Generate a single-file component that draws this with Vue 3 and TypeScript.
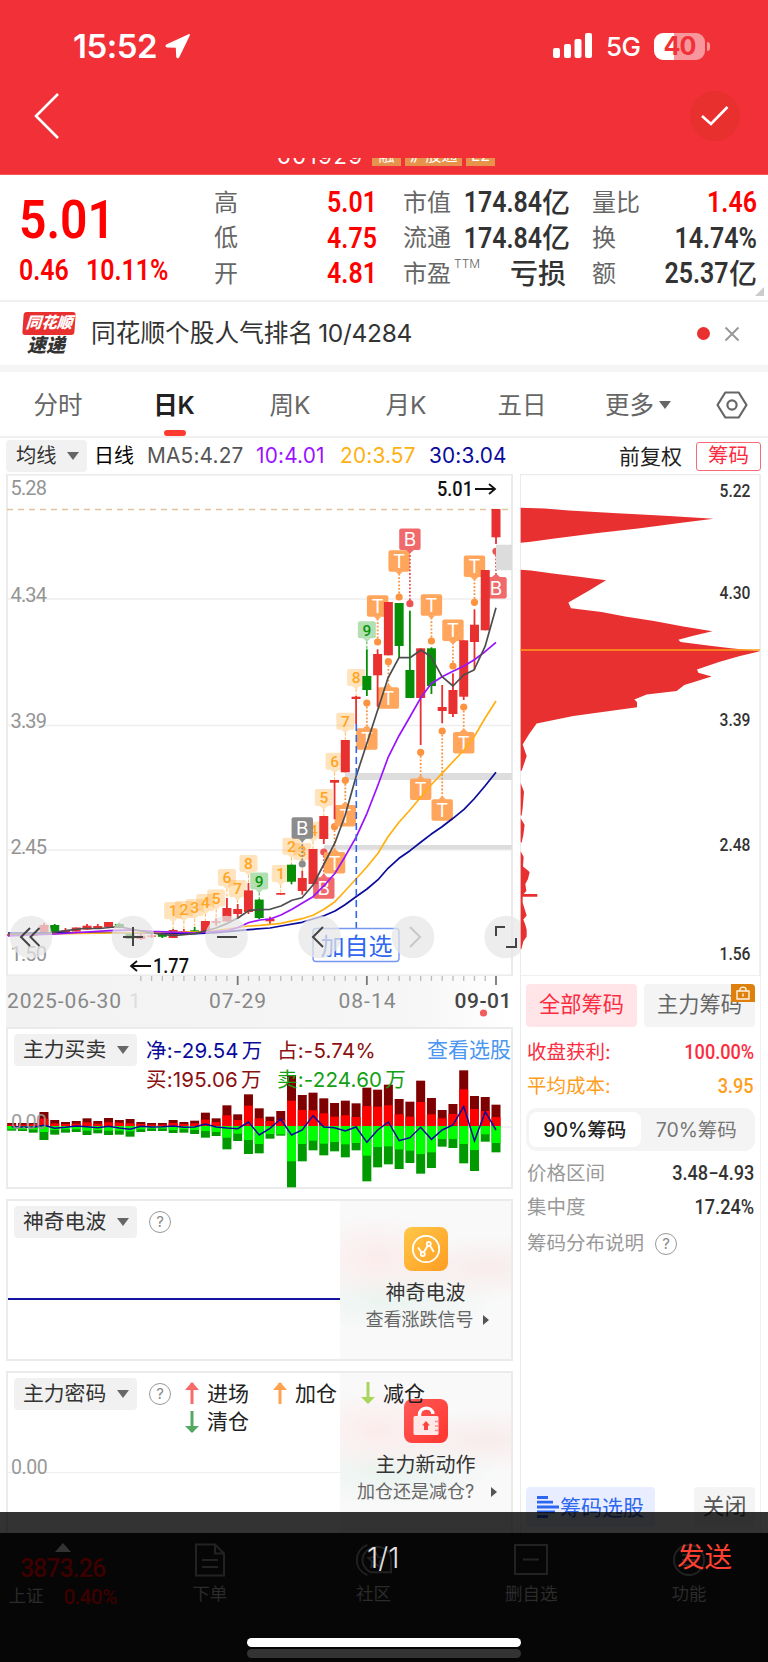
<script setup lang="ts">
interface Candle {
    up: boolean;
    top: number;
    bottom: number;
    high: number;
    low: number;
}

interface Signal {
    i: number;
    box: number;
    dot: number;
    text: string;
    kind: string;
}

const STEP = 10.763;
const FIRST = 11.67;
const ZERO = 498;

const xAt = (i: number) => FIRST + i * STEP;

//// quote header
const quoteCols = [
    [
        { label: "高", value: "5.01", unit: "", red: true },
        { label: "低", value: "4.75", unit: "", red: true },
        { label: "开", value: "4.81", unit: "", red: true },
    ],
    [
        { label: "市值", value: "174.84", unit: "亿", red: false },
        { label: "流通", value: "174.84", unit: "亿", red: false },
        { label: "市盈", sup: "TTM", value: "", unit: "亏损", red: false },
    ],
    [
        { label: "量比", value: "1.46", unit: "", red: true },
        { label: "换", value: "14.74%", unit: "", red: false },
        { label: "额", value: "25.37", unit: "亿", red: false },
    ],
];

const tabs = ["分时", "日K", "周K", "月K", "五日", "更多"];

//// candles: up, body top, body bottom, high, low
const rawCandles: [number, number, number, number, number][] = [
    [1, 934, 936, 934, 936],
    [1, 934, 936, 933, 937],
    [1, 934, 936, 934, 936],
    [1, 925, 932.5, 923, 932.5],
    [0, 925, 932, 924, 932],
    [1, 930.5, 932, 928, 932],
    [1, 927.5, 931.5, 927.5, 931.5],
    [1, 925.7, 929.6, 924, 929.6],
    [1, 926, 928.3, 924, 928.3],
    [1, 922, 927, 922, 927],
    [0, 924, 927.5, 923, 927.5],
    [0, 934, 939, 934, 939],
    [1, 935.7, 939, 934, 940],
    [1, 935.5, 936.7, 934, 938],
    [0, 934, 936.8, 934, 938],
    [1, 930, 938, 929, 938],
    [1, 931, 932.6, 929, 932.6],
    [0, 930.3, 932, 927, 932],
    [1, 921, 931, 921, 931],
    [1, 921.3, 922.8, 918.5, 925.7],
    [1, 908, 921.5, 898, 921.5],
    [1, 909, 914, 904, 917.5],
    [1, 890.4, 912, 883, 914],
    [0, 899.6, 918, 899, 919],
    [1, 918.7, 921.3, 916.7, 924.7],
    [1, 893, 894.7, 893, 894.7],
    [0, 864.7, 881.7, 864.7, 884.3],
    [1, 878, 891, 870.7, 894.7],
    [1, 849, 884, 849, 884],
    [1, 816, 839, 816, 844],
    [1, 780, 782.7, 780, 819.3],
    [1, 740, 772.3, 740, 772.3],
    [1, 696.7, 699, 696, 724],
    [0, 676, 690, 649.3, 696],
    [1, 654, 675.3, 649.3, 706.7],
    [1, 602, 655.3, 602, 655.3],
    [0, 603, 646, 603, 658],
    [0, 670, 698, 610.7, 698],
    [1, 648.3, 698, 648.3, 745],
    [0, 648.3, 686, 647.3, 694],
    [1, 707, 711, 685, 723.3],
    [1, 690, 714, 673.3, 717],
    [1, 640.3, 696.7, 640.3, 700],
    [1, 624.7, 642, 609.3, 670],
    [1, 570, 630.3, 570, 630.3],
    [1, 509, 537.3, 509, 544],
];

const candles: Candle[] = rawCandles.map((c) => ({
    up: c[0] === 1,
    top: c[1],
    bottom: c[2],
    high: c[3],
    low: c[4],
}));

//// moving averages, x y pairs
const maLines = [
    {
        color: "#0a0a9c",
        points: "8,933 109,932.5 195,933.6 216,932.7 238,930.7 249,929.6 270,928 281,926 302,922.3 324,915.7 335,911 345,904.7 356,896.7 367,889 378,879.7 388,868.3 399,858.3 410,850.7 421,842 431,834.3 442,826.7 453,818.3 464,809.3 474,799 485,786 496,772.3",
    },
    {
        color: "#ffb012",
        points: "8,934.6 109,933 206,931.8 227,929 238,927.5 249,926 260,925.3 281,923.3 302,918.7 313,915.3 324,909.3 335,901.7 345,891 356,879 367,866.7 378,853.3 388,836.7 399,822.3 410,810 421,796.7 431,785 442,773.3 453,761.7 464,750 474,737 485,718.3 496,701",
    },
    {
        color: "#9a12ff",
        points: "8,936 55,934 109,930.7 130,930 152,931.4 195,933 227,930.7 238,927.5 249,922.5 260,920 270,919 281,915 292,909.3 302,903.3 313,896.7 324,885.7 335,873.3 345,856.7 356,837.3 367,813.3 378,785 388,757.7 399,735.7 410,716.7 421,697.3 431,684 442,676.7 453,671.3 464,666 474,660 485,651.7 496,642.3",
    },
    {
        color: "#4d4d4d",
        points: "8,934 44,933.5 66,930.7 83,928.5 100,928.5 114,927 123,927.5 152,933 173,935.7 195,933.6 206,930.7 216,928 227,923.6 238,918 249,910.4 260,909.7 270,909.3 281,906 292,900.3 302,897.7 313,885 324,864 335,842.7 345,815.7 356,776.7 367,743 378,709 388,678 399,657.7 410,657.7 421,650 431,656.7 442,676.7 453,686 464,674.7 474,670 485,646.7 496,607.7",
    },
];

//// nine-turn counters: index, tag centre, number
const counters = [
    { i: 15, y: 911, n: 1 },
    { i: 16, y: 910, n: 2 },
    { i: 17, y: 908, n: 3 },
    { i: 18, y: 903, n: 4 },
    { i: 19, y: 898.6, n: 5 },
    { i: 20, y: 878, n: 6 },
    { i: 21, y: 889, n: 7 },
    { i: 22, y: 864, n: 8 },
    { i: 23, y: 881.5, n: 9 },
    { i: 25, y: 874, n: 1 },
    { i: 26, y: 846.7, n: 2 },
    { i: 27, y: 852, n: 3 },
    { i: 28, y: 830.7, n: 4 },
    { i: 29, y: 798, n: 5 },
    { i: 30, y: 761.7, n: 6 },
    { i: 31, y: 721.7, n: 7 },
    { i: 32, y: 678, n: 8 },
    { i: 33, y: 630.3, n: 9 },
];

const signals: Signal[] = [
    { i: 27, box: 828, dot: 864, text: "B", kind: "gray" },
    { i: 29, box: 888, dot: 852, text: "B", kind: "red" },
    { i: 30, box: 862.7, dot: 826.7, text: "T", kind: "orange" },
    { i: 31, box: 815.7, dot: 780.3, text: "T", kind: "orange" },
    { i: 33, box: 739, dot: 703, text: "T", kind: "orange" },
    { i: 34, box: 606, dot: 642, text: "T", kind: "orange" },
    { i: 35, box: 698, dot: 661.7, text: "T", kind: "orange" },
    { i: 36, box: 561, dot: 597, text: "T", kind: "orange" },
    { i: 37, box: 539.3, dot: 603.7, text: "B", kind: "red" },
    { i: 38, box: 789.3, dot: 752.3, text: "T", kind: "orange" },
    { i: 39, box: 605, dot: 641, text: "T", kind: "orange" },
    { i: 40, box: 810, dot: 731, text: "T", kind: "orange" },
    { i: 41, box: 630.3, dot: 666, text: "T", kind: "orange" },
    { i: 42, box: 742.7, dot: 707, text: "T", kind: "orange" },
    { i: 43, box: 566.3, dot: 602.3, text: "T", kind: "orange" },
    { i: 45, box: 587.7, dot: 551.3, text: "B", kind: "red" },
];

// small triangle between the box and its dot
const notch = (s: Signal) => {
    const x = xAt(s.i);
    const dir = s.dot > s.box ? 1 : -1;
    const y = s.box + dir * 10.6;
    return `${x - 4},${y} ${x + 4},${y} ${x},${y + dir * 3.5}`;
};

const buttons = [
    { x: 31, d: "M30 928l-9 9 9 9M39.5 928l-9 9 9 9" },
    { x: 133, d: "M123 937h20M133 927v19" },
    { x: 226.5, d: "M217 937h20" },
    { x: 319.5, d: "M323 927l-10 10 10 10" },
    { x: 413, d: "M410 927l10 10-10 10", dim: true },
    { x: 505.7, d: "M496 936v-9h9M516 938v9h-10" },
];

const ticks = Array.from({ length: 34 }, (_, k) => k + 12);
const isMajor = (i: number) => i === 21 || i === 33 || i === 45;

//// main force: buy top, active buy top, active sell bottom, sell bottom, net
const flow = [
    [489, 494, 508, 512, 500],
    [489, 494, 508, 513, 501],
    [489, 493, 509, 518, 502],
    [456, 476, 516, 540, 496],
    [480, 490, 510, 524, 505],
    [486, 492, 508, 518, 502],
    [483, 491, 508, 516, 498],
    [475, 487, 512, 525, 500],
    [483, 491, 510, 520, 503],
    [474, 487, 512, 525, 499],
    [480, 488, 512, 524, 504],
    [477, 490, 514, 530, 508],
    [486, 492, 508, 516, 499],
    [489, 494, 506, 513, 501],
    [489, 494, 506, 513, 500],
    [480, 489, 510, 519, 498],
    [486, 492, 508, 518, 502],
    [482, 490, 510, 522, 501],
    [458, 479, 513, 533, 492],
    [475, 486, 516, 528, 501],
    [436, 466, 533, 568, 504],
    [463, 480, 521, 543, 506],
    [403, 437, 540, 582, 486],
    [445, 475, 552, 580, 525],
    [470, 483, 522, 536, 505],
    [453, 480, 523, 527, 477],
    [345, 422, 604, 682, 525],
    [405, 450, 552, 604, 510],
    [398, 451, 542, 571, 467],
    [415, 460, 551, 586, 501],
    [429, 470, 546, 574, 503],
    [422, 466, 553, 592, 513],
    [430, 471, 549, 571, 501],
    [383, 438, 587, 664, 547],
    [389, 440, 561, 622, 510],
    [374, 436, 559, 613, 486],
    [417, 463, 568, 627, 542],
    [425, 470, 572, 609, 533],
    [362, 426, 582, 641, 502],
    [414, 463, 577, 624, 538],
    [450, 475, 537, 560, 510],
    [432, 462, 537, 564, 495],
    [331, 388, 552, 610, 439],
    [408, 447, 570, 633, 543],
    [411, 453, 523, 545, 455],
    [434, 471, 549, 577, 510],
];

const flowY = (v: number) => 960 + v / 3;
const netLine = flow.map((f, i) => `${xAt(i)},${flowY(f[4])}`).join(" ");

const chipLabels = [
    { y: 491, text: "5.22" },
    { y: 593.4, text: "4.30" },
    { y: 719.5, text: "3.39" },
    { y: 844.6, text: "2.48" },
    { y: 954, text: "1.56" },
];

const chipShapes = [
    "32,112 105,114 177,120 322,128 465,135 611,144 515,156 384,173 257,187 128,203 63,212 32,215",
    "32,295 63,297 128,306 208,316 288,326 235,358 175,392 183,409 275,420 345,433 432,447 520,463 607,477 550,490 505,502 512,509 600,520 663,527 750,536 690,550 627,568 561,590 565,600 605,611 523,636 500,654 410,664 373,679 381,686 381,702 305,712 190,728 80,750 58,780 38,812 50,846 42,870 35,890 32,890",
    "32,926 42,952 38,1000 35,1022 32,1022",
    "32,1030 44,1050 40,1080 35,1102 32,1102",
    "32,1128 41,1145 39,1173 59,1189 54,1210 46,1225 49,1245 41,1254 82,1254 82,1262 38,1262 38,1280 50,1318 40,1330 46,1345 50,1360 50,1380 40,1395 34,1418 32,1418",
];
</script>

<template>
    <div class="phone">
        <header class="top">
            <div class="status">
                <span class="time">15:52</span>
                <svg class="locate" width="26" height="26" viewBox="0 0 26 26">
                    <path
                        d="M23.5 1.2 1.8 11.3c-2 1-1.5 3 .5 3.1l8.500.4.4 8.700c.1 2 2.300 2.500 3.200.5L24.8 2.5c.5-1.2-.3-1.7-1.3-1.3z"
                        fill="#fff"
                    />
                </svg>
                <svg class="signal" width="40" height="26" viewBox="0 0 40 26">
                    <rect x="0" y="15" width="7" height="10" rx="2" />
                    <rect x="11" y="11" width="7" height="14" rx="2" />
                    <rect x="21.5" y="6" width="7" height="19" rx="2" />
                    <rect x="32" y="0" width="7" height="25" rx="2" />
                </svg>
                <span class="net">5G</span>
                <div class="battery"><span>40</span></div>
                <i class="nub"></i>
            </div>
            <div class="nav">
                <svg width="26" height="46" viewBox="0 0 26 46">
                    <path d="M24 1 2 23l22 22" fill="none" stroke="#fff" stroke-width="2.6" />
                </svg>
                <div class="confirm">
                    <svg width="28" height="20" viewBox="0 0 28 20">
                        <path d="M1 10l9 8L26.5 1" fill="none" stroke="#fff" stroke-width="2.6" />
                    </svg>
                </div>
            </div>
            <div class="code-clip">
                <div class="code-row">
                    <span class="code">601929</span>
                    <span class="tag">融</span>
                    <span class="tag wide">沪股通</span>
                    <span class="tag">L2</span>
                </div>
            </div>
        </header>

        <section class="quote">
            <div class="price">
                <div class="now"><span class="din">5.01</span></div>
                <div class="change">
                    <span class="din diff">0.46</span>
                    <span class="din">10.11%</span>
                </div>
            </div>
            <div v-for="(col, c) in quoteCols" :key="c" class="quote-col">
                <div v-for="row in col" :key="row.label" class="quote-row">
                    <span class="q-label">{{ row.label }}<sup v-if="'sup' in row">{{ row.sup }}</sup></span>
                    <span class="q-value" :class="{ red: row.red }">
                        <b class="din">{{ row.value }}</b>{{ row.unit }}
                    </span>
                </div>
            </div>
            <i class="corner"></i>
        </section>

        <section class="news">
            <div class="logo">
                <div class="logo-top">同花顺</div>
                <div class="logo-bottom">速递</div>
            </div>
            <span class="news-text">同花顺个股人气排名<em>10/4284</em></span>
            <i class="news-dot"></i>
            <svg width="16" height="16" viewBox="0 0 16 16">
                <path d="M1.5 1.5l13 13M14.5 1.5l-13 13" stroke="#999" stroke-width="2" />
            </svg>
        </section>

        <nav class="tabs">
            <div v-for="(tab, t) in tabs" :key="tab" class="tab" :class="{ active: t === 1 }">
                {{ tab }}<i v-if="t === 5" class="caret"></i>
            </div>
            <div class="tab">
                <svg width="32" height="28" viewBox="0 0 32 28">
                    <path
                        d="M9.3 1.5h13.4L30.5 14l-7.8 12.5H9.3L1.5 14z"
                        fill="none"
                        stroke="#666"
                        stroke-width="2.2"
                        stroke-linejoin="round"
                    />
                    <circle cx="16" cy="14" r="4.6" fill="none" stroke="#666" stroke-width="2.2" />
                </svg>
            </div>
        </nav>

        <div class="ma-row">
            <div class="select small">均线<i class="caret"></i></div>
            <span class="ma-day">日线</span>
            <span class="ma ma5">MA5:4.27</span>
            <span class="ma ma10">10:4.01</span>
            <span class="ma ma20">20:3.57</span>
            <span class="ma ma30">30:3.04</span>
            <span class="adjust">前复权</span>
            <span class="chip-btn">筹码</span>
        </div>

        <main class="board">
            <div class="left">
                <svg class="kline" width="520" height="502" viewBox="0 474 520 502">
                    <rect x="7" y="474.5" width="505" height="501" fill="#fff" stroke="#ebebeb" stroke-width="2" />
                    <path d="M8 599h503M8 725.5h503M8 850h503" stroke="#eee" stroke-width="1.3" />
                    <path d="M7 509.5h504" stroke="#e0c49c" stroke-width="1.5" stroke-dasharray="6 5" />
                    <g class="axis">
                        <text x="10.5" y="494.5" textLength="36.5">5.28</text>
                        <text x="10.5" y="602" textLength="36.5">4.34</text>
                        <text x="10.5" y="727.5" textLength="36.5">3.39</text>
                        <text x="10.5" y="853.5" textLength="36.5">2.45</text>
                        <text x="10.5" y="961" textLength="36.5">1.50</text>
                    </g>
                    <rect x="345" y="773" width="167" height="7" fill="#ddd" />
                    <rect x="324" y="845" width="188" height="4.5" fill="#ddd" />

                    <g v-for="c in counters" :key="`n${c.i}`" :class="c.n === 9 ? 'nine' : 'count'">
                        <path
                            :d="`M${xAt(c.i)} ${c.y + 11}V${candles[c.i].high}`"
                            class="stem"
                            stroke-dasharray="3 1.5"
                        />
                        <rect :x="xAt(c.i) - 9" :y="c.y - 9" width="18" height="17" rx="2" />
                        <polygon
                            :points="`${xAt(c.i) - 4},${c.y + 8} ${xAt(c.i) + 4},${c.y + 8} ${xAt(c.i)},${c.y + 11.5}`"
                        />
                        <text :x="xAt(c.i)" :y="c.y + 5.2" text-anchor="middle">{{ c.n }}</text>
                    </g>

                    <g v-for="s in signals" :key="`s${s.i}`" :class="['signal-mark', s.kind]">
                        <path
                            :d="`M${xAt(s.i)} ${s.dot}V${s.box}`"
                            class="dots"
                            stroke-dasharray="1.8 1.8"
                        />
                        <circle :cx="xAt(s.i)" :cy="s.dot" r="3.6" />
                        <rect :x="xAt(s.i) - 10.7" :y="s.box - 10.7" width="21.4" height="21.4" rx="2" />
                        <polygon :points="notch(s)" />
                        <text :x="xAt(s.i)" :y="s.box + 7" text-anchor="middle">{{ s.text }}</text>
                    </g>

                    <g v-for="(c, i) in candles" :key="i" :fill="c.up ? '#e93030' : '#068f06'">
                        <rect :x="xAt(i) - 0.9" :y="c.high" width="1.8" :height="c.low - c.high" />
                        <rect :x="xAt(i) - 4.5" :y="c.top" width="9" :height="c.bottom - c.top" />
                    </g>

                    <polyline
                        v-for="line in maLines"
                        :key="line.color"
                        :points="line.points"
                        :stroke="line.color"
                        fill="none"
                        stroke-width="1.7"
                        stroke-linejoin="round"
                    />
                    <rect x="496" y="544.7" width="16" height="25.5" fill="#dcdcdc" />

                    <path d="M356.3 724v204" stroke="#2f66f0" stroke-width="1.6" stroke-dasharray="7 4" />
                    <rect x="313" y="928.5" width="86" height="33" rx="3" fill="#fff" stroke="#7396f5" stroke-width="1.4" />
                    <text x="320.5" y="954.5" class="add" textLength="72">加自选</text>

                    <g v-for="b in buttons" :key="b.x">
                        <circle :cx="b.x" cy="937" r="21.3" fill="#e6e6e6" fill-opacity="0.72" />
                        <path :d="b.d" fill="none" :stroke="b.dim ? '#c8c8c8' : '#444'" stroke-width="2" />
                    </g>

                    <text x="437" y="496" class="peak" textLength="36" lengthAdjust="spacingAndGlyphs">5.01</text>
                    <path d="M475 489h19M489 484l6 5-6 5" class="arrow" />
                    <path d="M151 966h-19M137 961l-6 5 6 5" class="arrow" />
                    <text x="153" y="973" class="peak" textLength="36" lengthAdjust="spacingAndGlyphs">1.77</text>
                </svg>

                <svg class="dates" width="520" height="51" viewBox="0 976 520 51">
                    <defs>
                        <linearGradient id="axisFade" x1="0" y1="0" x2="1" y2="0">
                            <stop offset="0" stop-color="#f2f2f2" />
                            <stop offset="0.8" stop-color="#f6f6f6" />
                            <stop offset="1" stop-color="#fff" />
                        </linearGradient>
                    </defs>
                    <rect x="6" y="976" width="507" height="51" fill="url(#axisFade)" />
                    <path
                        v-for="i in ticks"
                        :key="i"
                        :d="`M${xAt(i)} 976v${isMajor(i) ? 9 : 5}`"
                        :stroke="isMajor(i) ? '#777' : '#bbb'"
                        :stroke-width="isMajor(i) ? 1.8 : 1.3"
                    />
                    <text x="7" y="1007.5" textLength="114">2025-06-30</text>
                    <text x="129" y="1007.5" class="ghost">1</text>
                    <text x="209" y="1007.5" textLength="57">07-29</text>
                    <text x="338.5" y="1007.5" textLength="57">08-14</text>
                    <text x="454.5" y="1007.5" textLength="57" class="last">09-01</text>
                    <circle cx="483.5" cy="1013" r="3.6" fill="#f25b5b" />
                </svg>

                <div class="panel flow">
                    <svg class="flow-chart" width="520" height="162" viewBox="0 1027 520 162">
                        <path d="M8 1127h503" stroke="#eee" stroke-width="1.3" />
                        <g v-for="(f, i) in flow" :key="i">
                            <rect :x="xAt(i) - 4.5" :y="flowY(f[0])" width="9" :height="(ZERO - f[0]) / 3" fill="#7f0000" />
                            <rect :x="xAt(i) - 4.5" :y="flowY(f[1])" width="9" :height="(ZERO - f[1]) / 3" fill="#f00" />
                            <rect :x="xAt(i) - 4.5" :y="flowY(ZERO)" width="9" :height="(f[3] - ZERO) / 3" fill="#090" />
                            <rect :x="xAt(i) - 4.5" :y="flowY(ZERO)" width="9" :height="(f[2] - ZERO) / 3" fill="#0f0" />
                        </g>
                        <polyline :points="netLine" fill="none" stroke="#0a0a9c" stroke-width="1.5" />
                        <text x="11" y="1129" class="zero" textLength="36">0.00</text>
                    </svg>
                    <div class="panel-head">
                        <div class="select">主力买卖<i class="caret"></i></div>
                        <div class="flow-values">
                            <span class="navy">净:-29.54<u>万</u></span>
                            <span class="maroon">占:-5.74%</span>
                            <span class="maroon">买:195.06<u>万</u></span>
                            <span class="green">卖:-224.60<u>万</u></span>
                        </div>
                        <a class="pick">查看选股</a>
                    </div>
                </div>

                <div class="panel wave">
                    <div class="panel-head">
                        <div class="select">神奇电波<i class="caret"></i></div>
                        <span class="help">?</span>
                    </div>
                    <i class="wave-line"></i>
                    <div class="promo">
                        <svg width="44" height="44" viewBox="0 0 44 44">
                            <defs>
                                <linearGradient id="gold" x1="0" y1="0" x2="1" y2="1">
                                    <stop offset="0" stop-color="#ffc748" />
                                    <stop offset="1" stop-color="#ff9d22" />
                                </linearGradient>
                            </defs>
                            <rect width="44" height="44" rx="8" fill="url(#gold)" />
                            <g fill="none" stroke="#fff" stroke-width="1.8">
                                <circle cx="22" cy="22" r="13.2" />
                                <path d="M14 20.5l3.7 5M20 25l3.8-6.5M26 18.5l3.8 6.5" />
                                <circle cx="18.8" cy="27" r="2" />
                                <circle cx="24.8" cy="16.8" r="2" />
                            </g>
                        </svg>
                        <div class="promo-title">神奇电波</div>
                        <div class="promo-sub">查看涨跌信号<i class="play"></i></div>
                    </div>
                </div>

                <div class="panel secret">
                    <div class="zero-row"><span>0.00</span></div>
                    <div class="promo">
                        <svg width="44" height="44" viewBox="0 0 44 44">
                            <defs>
                                <linearGradient id="ruby" x1="0" y1="0" x2="1" y2="1">
                                    <stop offset="0" stop-color="#ff5a58" />
                                    <stop offset="1" stop-color="#ff352e" />
                                </linearGradient>
                            </defs>
                            <rect width="44" height="44" rx="8" fill="url(#ruby)" />
                            <path d="M15.5 17v-1c0-9 13-9 13.5-1" fill="none" stroke="#fff" stroke-width="3.4" />
                            <rect x="9.5" y="17" width="25" height="19" rx="1.5" fill="#ffe9e8" />
                            <path d="M22 22l4 4.5h-2V31h-4v-4.5h-2z" fill="#fb4640" />
                            <path d="M31 22.5h3.5M31 27h3.5M31 31.5h3.5" stroke="#fb8a86" stroke-width="1.3" />
                        </svg>
                        <div class="promo-title">主力新动作</div>
                        <div class="promo-sub wide">加仓还是减仓?<i class="play"></i></div>
                    </div>
                    <div class="panel-head">
                        <div class="select">主力密码<i class="caret"></i></div>
                        <span class="help">?</span>
                        <div class="legend">
                            <span><svg width="14" height="22" viewBox="0 0 14 22"><path d="M7 1v21" stroke="#f76a68" stroke-width="3" /><path d="M0 8 7 0l7 8z" fill="#f76a68" /></svg>进场</span>
                            <span><svg width="14" height="22" viewBox="0 0 14 22"><path d="M7 1v21" stroke="#ffa14f" stroke-width="3" /><path d="M0 8 7 0l7 8z" fill="#ffa14f" /></svg>加仓</span>
                            <span><svg width="14" height="22" viewBox="0 0 14 22"><path d="M7 0v21" stroke="#a9d65a" stroke-width="3" /><path d="M0 15l7 7 7-7z" fill="#a9d65a" /></svg>减仓</span>
                            <span><svg width="14" height="22" viewBox="0 0 14 22"><path d="M7 0v21" stroke="#55a864" stroke-width="3" /><path d="M0 15l7 7 7-7z" fill="#55a864" /></svg>清仓</span>
                        </div>
                    </div>
                </div>
            </div>

            <aside class="right">
                <svg class="chips" width="248" height="502" viewBox="520 474 248 502">
                    <path d="M519 474.5h241v501.5h-241" fill="none" stroke="#ebebeb" stroke-width="1.5" />
                    <g transform="translate(510 470) scale(0.33333 0.33806)" fill="#e93030">
                        <polygon v-for="(p, k) in chipShapes" :key="k" :points="p" />
                    </g>
                    <path d="M519 650h241" stroke="#ff9f1a" stroke-width="1.5" />
                    <text
                        v-for="l in chipLabels"
                        :key="l.text"
                        x="719.5"
                        :y="l.y + 6"
                        textLength="31"
                        lengthAdjust="spacingAndGlyphs"
                    >
                        {{ l.text }}
                    </text>
                </svg>

                <div class="info">
                    <div class="kinds">
                        <span class="kind on">全部筹码</span>
                        <span class="kind">
                            主力筹码
                            <span class="lock">
                                <svg width="14" height="14" viewBox="0 0 14 14">
                                    <path d="M1 5h12v8H1zM4 5V3.5C4 .3 10 .3 10 3.5V5M7 7.5V10.5" fill="none" stroke="#fff3e0" stroke-width="1.4" />
                                </svg>
                            </span>
                        </span>
                    </div>
                    <div class="info-row profit"><span>收盘获利:</span><b>100.00%</b></div>
                    <div class="info-row cost"><span>平均成本:</span><b>3.95</b></div>
                    <div class="segment">
                        <span class="seg on">90%筹码</span>
                        <span class="seg">70%筹码</span>
                    </div>
                    <div class="info-row"><span>价格区间</span><b>3.48−4.93</b></div>
                    <div class="info-row"><span>集中度</span><b>17.24%</b></div>
                    <div class="info-row explain"><span>筹码分布说明</span><span class="help">?</span></div>
                    <div class="actions">
                        <span class="pick-btn">
                            <svg width="22" height="22" viewBox="0 0 22 22">
                                <path d="M0 1.5h11M0 6.2h16M0 11h22M0 15.8h18M0 20.5h11" stroke="#2f66f0" stroke-width="2.8" />
                            </svg>
                            筹码选股
                        </span>
                        <span class="close-btn">关闭</span>
                    </div>
                </div>
            </aside>
        </main>

        <footer class="mask">
            <div class="shade"></div>
            <div class="bar">
                <div class="index">
                    <i class="up"></i>
                    <strong>3873.26</strong>
                    <div class="index-row"><span>上证</span><b>0.40%</b></div>
                </div>
                <div class="item">
                    <svg width="32" height="34" viewBox="0 0 32 34">
                        <path d="M2 1.5h19l9 9v22H2zM21 1.5v9h9M8 17h16M8 24h16" />
                    </svg>
                    下单
                </div>
                <div class="item">
                    <svg width="38" height="36" viewBox="0 0 38 36">
                        <path d="M12 2C-3 8-3 28 12 34M15 6C4 12 4 24 15 31h22V17M15 6c10-5 22 0 22 12" />
                        <path d="M21 10l2.5 5 5.5.8-4 3.9 1 5.5-5-2.6-5 2.6 1-5.5-4-3.9 5.5-.8z" />
                    </svg>
                    社区
                </div>
                <div class="item">
                    <svg width="34" height="32" viewBox="0 0 34 32">
                        <path d="M1 1h32v29H1zM9 15.5h16" />
                    </svg>
                    删自选
                </div>
                <div class="item">
                    <svg width="34" height="34" viewBox="0 0 34 34">
                        <circle cx="17" cy="17" r="15" />
                        <path d="M10 12h14M10 17h14M10 22h14" />
                    </svg>
                    功能
                </div>
            </div>
            <span class="page-no">1/1</span>
            <span class="send">发送</span>
            <i class="home"></i>
            <i class="home second"></i>
        </footer>
    </div>
</template>

<style>
body {
    background: #fff;
}
</style>

<style scoped>
.phone {
    position: relative;
    width: 768px;
    height: 1662px;
    overflow: hidden;
    background: #fff;
    font-family: "Inter", "Noto Sans CJK SC", sans-serif;
    line-height: 1;
    color: #333;
}

.phone * {
    box-sizing: border-box;
    white-space: nowrap;
}

svg {
    display: block;
    flex: none;
}

.din {
    display: inline-block;
    font-family: "Roboto", sans-serif;
    font-weight: 600;
    transform: scaleX(0.86);
    transform-origin: left center;
}

.caret {
    border: 6px solid transparent;
    border-top: 8px solid #666;
    border-bottom: 0;
}

/* top */
.top {
    height: 175px;
    background: #f23038;
    color: #fff;
    border-bottom: 1px solid #f25a58;
}

.status {
    height: 92px;
    padding-left: 73px;
    display: flex;
    align-items: center;
}

.time {
    width: 92px;
    font-size: 33px;
    font-weight: 600;
    letter-spacing: -0.5px;
}

.signal {
    margin-left: 362px;
    fill: #fff;
}

.net {
    width: 48px;
    margin-left: 13px;
    padding-top: 2px;
    font-size: 26px;
    font-weight: 500;
    letter-spacing: -0.5px;
}

.battery {
    width: 51px;
    height: 27px;
    border-radius: 9px;
    display: flex;
    align-items: center;
    justify-content: center;
    background: linear-gradient(to right, #fff 40%, #f8979b 40%);
    color: #f23038;
    font-size: 25px;
    font-weight: 700;
    letter-spacing: -1px;
}

.nub {
    width: 3px;
    height: 9px;
    margin-left: 2px;
    border-radius: 0 3px 3px 0;
    background: #f8979b;
}

.nav {
    height: 66px;
    padding: 0 28px 18px 34px;
    display: flex;
    align-items: center;
    justify-content: space-between;
}

.confirm {
    width: 50px;
    height: 50px;
    border-radius: 50%;
    display: flex;
    align-items: center;
    justify-content: center;
    background: #e8302f;
}

.code-clip {
    height: 8px;
    overflow: hidden;
    display: flex;
    align-items: flex-end;
    padding-left: 277px;
}

.code-row {
    display: flex;
    align-items: flex-end;
    gap: 4px;
}

.code {
    width: 91px;
    height: 21px;
    font-size: 22px;
    letter-spacing: 1.6px;
}

.tag {
    width: 29px;
    height: 21px;
    padding-top: 2px;
    background: #e8934b;
    font-size: 16px;
    text-align: center;
}

.tag.wide {
    width: 57px;
}

/* quote */
.quote {
    position: relative;
    height: 127px;
    padding: 10px 10px 0 19px;
    display: flex;
    border-bottom: 2px solid #f0f0f0;
}

.price {
    width: 195px;
    color: #f00;
}

.now {
    height: 70px;
    padding-top: 7px;
    font-size: 54px;
}

.now .din {
    transform: scaleX(0.89);
}

.change {
    display: flex;
    padding-top: 1px;
    font-size: 29px;
}

.diff {
    width: 67px;
}

.quote-col {
    width: 163px;
    margin-right: 26px;
}

.quote-col:last-of-type {
    width: 165px;
    margin-right: 0;
}

.quote-row {
    height: 35.5px;
    display: flex;
    align-items: center;
    justify-content: space-between;
}

.q-label {
    position: relative;
    font-size: 24px;
    color: #666;
}

.q-label sup {
    position: absolute;
    left: 51px;
    top: -4px;
    font-size: 12px;
    font-weight: 300;
}

.q-value {
    display: flex;
    align-items: center;
    justify-content: flex-end;
    font-size: 28px;
    font-weight: 500;
}

.q-value .din {
    font-size: 29px;
    transform-origin: right center;
}

.red {
    color: #f00;
}

.corner {
    position: absolute;
    right: 4px;
    bottom: 4px;
    border-left: 9px solid transparent;
    border-bottom: 9px solid #ccc;
}

/* news */
.news {
    height: 63px;
    padding: 0 28px 0 23px;
    display: flex;
    align-items: center;
}

.logo {
    width: 68px;
    font-style: italic;
    font-weight: 900;
}

.logo-top {
    width: 52px;
    height: 23px;
    border-radius: 3px;
    background: #e93030;
    color: #fff;
    font-size: 15.5px;
    line-height: 22px;
    text-align: center;
    transform: skewX(-4deg);
}

.logo-bottom {
    padding-left: 4px;
    font-size: 19px;
    line-height: 21px;
}

.news-text {
    flex: 1;
    font-size: 24.7px;
}

.news-text em {
    margin-left: 5px;
    font-style: normal;
    font-size: 24.5px;
    letter-spacing: -0.3px;
}

.news-dot {
    width: 13px;
    height: 13px;
    margin-right: 14px;
    border-radius: 50%;
    background: #e93030;
}

/* tabs */
.tabs {
    height: 73px;
    display: grid;
    grid-template-columns: repeat(6, 116px) 72px;
    border-top: 7px solid #f5f5f5;
    border-bottom: 2px solid #f0f0f0;
}

.tab {
    position: relative;
    padding-top: 2px;
    display: flex;
    align-items: center;
    justify-content: center;
    font-size: 24.5px;
    color: #666;
}

.tab .caret {
    margin-left: 5px;
}

.tab.active {
    font-weight: 600;
    color: #222;
}

.tab.active::after {
    content: "";
    position: absolute;
    left: 48px;
    bottom: 0;
    width: 22px;
    height: 6px;
    border-radius: 3px;
    background: #ff3b30;
}

.ma-row {
    height: 36px;
    padding: 0 7px 0 6px;
    display: flex;
    align-items: center;
    font-size: 20.8px;
}

.select {
    width: 123px;
    height: 32px;
    flex: none;
    display: flex;
    align-items: center;
    justify-content: space-between;
    padding: 0 8px 0 9px;
    border-radius: 4px;
    background: #f1f1f1;
    font-size: 20.8px;
    color: #333;
}

.select.small {
    width: 81px;
    padding-left: 10px;
    font-size: 20.3px;
}

.ma-day {
    width: 53px;
    margin-left: 7px;
    font-size: 20px;
    color: #000;
}

.ma {
    letter-spacing: 0.2px;
}

.ma5 {
    width: 109px;
    color: #555;
}

.ma10 {
    width: 84px;
    color: #9a12ff;
}

.ma20 {
    width: 89px;
    color: #ffb012;
}

.ma30 {
    color: #0a0a9c;
}

.adjust {
    margin-left: auto;
    margin-right: 14px;
    font-size: 21px;
    color: #222;
}

.chip-btn {
    width: 65px;
    height: 29px;
    border: 1.5px solid #f96a76;
    border-radius: 3px;
    font-size: 20.5px;
    line-height: 25px;
    text-align: center;
    color: #fb2c40;
}

/* board */
.board {
    display: flex;
}

.left {
    position: relative;
    z-index: 1;
    width: 520px;
}

.kline {
    font-family: "Roboto", sans-serif;
}

.axis text,
.zero {
    font-size: 20px;
    font-family: "Roboto", sans-serif;
    fill: #949494;
}

.count rect,
.count polygon {
    fill: #ffa733;
    fill-opacity: 0.32;
}

.count text {
    fill: #ffa51f;
}

.count .stem {
    stroke: #ffb95e;
}

.nine rect,
.nine polygon {
    fill: #9fd8a0;
    fill-opacity: 0.8;
}

.nine text {
    fill: #0a960a;
}

.nine .stem {
    stroke: #3fae40;
}

.count text,
.nine text {
    font-size: 15.5px;
    font-weight: 500;
}

.signal-mark text {
    font-family: "Inter", sans-serif;
    font-size: 19px;
    fill: #fff;
}

.dots {
    stroke-width: 1.8px;
}

.orange {
    fill: #ffa55c;
    stroke: none;
}

.orange circle {
    fill: #fb933f;
}

.orange .dots {
    stroke: #fb933f;
}

.signal-mark.red {
    fill: #f06a6c;
}

.signal-mark.red circle {
    fill: #ec5355;
}

.signal-mark.red .dots {
    stroke: #ec5355;
}

.gray {
    fill: #8c8c8c;
}

.gray .dots {
    stroke: #8c8c8c;
}

.add {
    font-family: "Noto Sans CJK SC", sans-serif;
    font-size: 24px;
    fill: #2f66f0;
}

.peak {
    font-size: 20.5px;
    font-weight: 500;
    fill: #111;
}

.arrow {
    fill: none;
    stroke: #111;
    stroke-width: 1.8px;
}

.dates text {
    font-family: "Roboto", sans-serif;
    font-size: 21px;
    fill: #888;
}

.dates .ghost {
    fill: #ddd;
}

.dates .last {
    font-weight: 500;
    fill: #444;
}

.panel {
    position: relative;
    width: 507px;
    height: 162px;
    margin-left: 6px;
    border: 2px solid #ebebeb;
}

.panel-head {
    position: relative;
    display: flex;
    padding: 5px 0 0 6px;
}

.flow-chart {
    position: absolute;
    left: -8px;
    top: -2px;
}

.zero {
    opacity: 0.9;
}

.flow-values {
    width: 290px;
    padding: 3px 0 0 9px;
    display: grid;
    grid-template-columns: 131px auto;
    grid-auto-rows: 28.5px;
    align-items: center;
    font-size: 20.5px;
    letter-spacing: 0.2px;
}

.flow-values u {
    margin-left: 3px;
    text-decoration: none;
}

.navy {
    color: #0a0a9c;
}

.maroon {
    color: #8b1010;
}

.green {
    color: #14a014;
}

.pick {
    padding-top: 5px;
    font-size: 21px;
    color: #4a96f0;
}

.wave {
    margin-top: 10px;
}

.help {
    width: 22px;
    height: 22px;
    flex: none;
    border: 1.8px solid #999;
    border-radius: 50%;
    font-size: 15px;
    line-height: 19px;
    text-align: center;
    color: #888;
}

.panel-head .help {
    margin: 5px 0 0 12px;
}

.wave-line {
    display: block;
    width: 332px;
    height: 2px;
    margin-top: 60px;
    background: #1414a0;
}

.promo {
    position: absolute;
    top: 0;
    right: 0;
    width: 171px;
    height: 158px;
    padding-top: 26px;
    display: flex;
    flex-direction: column;
    align-items: center;
    background:
        radial-gradient(ellipse 75px 44px at 22% 36%, rgba(252, 232, 232, 0.8), transparent),
        radial-gradient(ellipse 100px 32px at 85% 42%, rgba(248, 232, 232, 0.8), transparent),
        radial-gradient(ellipse 110px 34px at 30% 62%, rgba(232, 243, 238, 0.9), transparent),
        #f9f9f9;
}

.promo-title {
    margin-top: 12px;
    font-size: 20px;
}

.promo-sub {
    margin-top: 8px;
    padding-left: 3px;
    display: flex;
    align-items: center;
    font-size: 18px;
    color: #666;
}

.play {
    margin-left: 9px;
    border: 5.5px solid transparent;
    border-left: 6px solid #555;
    border-right: 0;
}

.wide .play {
    margin-left: 17px;
}

.secret {
    height: 164px;
    margin-top: 10px;
}

.secret .promo {
    height: 160px;
}

.zero-row {
    position: absolute;
    left: 0;
    top: 87px;
    width: 332px;
    height: 13px;
    padding-left: 3px;
    border-bottom: 1.5px solid #eee;
    font-family: "Roboto", sans-serif;
    font-size: 19.5px;
    line-height: 16px;
    letter-spacing: -0.4px;
    color: #999;
}

.legend {
    margin: 1px 0 0 14px;
    display: grid;
    grid-template-columns: repeat(3, 88px);
    grid-auto-rows: 28.5px;
    font-size: 21px;
    color: #222;
}

.legend span {
    display: flex;
    align-items: center;
    gap: 8px;
}

/* chips */
.right {
    width: 241px;
    border-left: 1.5px solid #ebebeb;
    border-right: 1.5px solid #f0f0f0;
}

.chips {
    margin-left: -1px;
    font-family: "Roboto", sans-serif;
    font-size: 18px;
    font-weight: 500;
    fill: #333;
}

.info {
    padding: 8px 5px 0 5px;
}

.kinds {
    display: flex;
    gap: 7px;
}

.kind {
    position: relative;
    flex: 1;
    height: 43px;
    border-radius: 4px;
    background: #f4f4f4;
    font-size: 21.2px;
    line-height: 41px;
    text-align: center;
    color: #666;
}

.kind.on {
    background: #ffe5e8;
    color: #fb2c40;
}

.lock {
    position: absolute;
    right: 0;
    top: 0;
    width: 24px;
    height: 18px;
    display: flex;
    align-items: center;
    justify-content: center;
    border-top-right-radius: 4px;
    background: #dd800c;
}

.info-row {
    height: 34.5px;
    padding: 0 1px;
    display: flex;
    align-items: center;
    justify-content: space-between;
    font-size: 19.5px;
    color: #999;
}

.info-row b {
    font-family: "Roboto", sans-serif;
    font-size: 19.5px;
    font-weight: 500;
    transform: scaleX(0.93);
    transform-origin: right center;
    color: #333;
}

.profit {
    margin-top: 8px;
}

.profit,
.profit b {
    color: #fb2c40;
}

.cost,
.cost b {
    color: #ff9d1c;
}

.segment {
    height: 43px;
    margin: 4px 0 5px;
    padding: 4px 3px;
    display: flex;
    border-radius: 11px;
    background: #f4f4f4;
    font-size: 19.5px;
}

.seg {
    flex: 1;
    border-radius: 8px;
    line-height: 36px;
    text-align: center;
    color: #777;
}

.seg.on {
    background: #fff;
    color: #222;
    font-weight: 500;
}

.explain {
    height: 37px;
    justify-content: flex-start;
    gap: 11px;
}

.actions {
    margin-top: 225px;
    display: flex;
    justify-content: space-between;
}

.pick-btn {
    width: 129px;
    height: 40px;
    padding-left: 11px;
    display: flex;
    align-items: center;
    gap: 1px;
    border-radius: 4px;
    background: #e8eeff;
    font-size: 21px;
    color: #2f66f0;
}

.close-btn {
    width: 61px;
    height: 40px;
    border-radius: 4px;
    background: #f4f4f4;
    font-size: 22px;
    line-height: 38px;
    text-align: center;
    color: #555;
}

/* preview mask over the bottom bar */
.mask {
    position: absolute;
    left: 0;
    top: 1512px;
    z-index: 2;
    width: 768px;
    height: 150px;
}

.shade {
    height: 21px;
    background: rgba(0, 0, 0, 0.8);
}

.bar {
    height: 129px;
    display: flex;
    background: #060606;
    font-size: 17.5px;
    color: #2b2b2b;
}

.index {
    width: 126px;
    padding-top: 10px;
    display: flex;
    flex-direction: column;
    align-items: center;
}

.up {
    border: 8px solid transparent;
    border-bottom: 9px solid #333;
    border-top: 0;
}

.index strong {
    margin-top: 4px;
    font-family: "Roboto", sans-serif;
    font-size: 25px;
    font-weight: 500;
    letter-spacing: -1px;
    color: #3d0000;
}

.index-row {
    display: flex;
    gap: 20px;
    margin-top: 6px;
    font-size: 17.5px;
}

.index-row b {
    font-family: "Roboto", sans-serif;
    font-size: 21px;
    font-weight: 500;
    letter-spacing: -0.8px;
    color: #3d0000;
}

.item {
    width: 159px;
    padding-top: 10px;
    display: flex;
    flex-direction: column;
    align-items: center;
    gap: 8px;
}

.item svg {
    height: 34px;
    fill: none;
    stroke: #222;
    stroke-width: 2px;
}

.item:nth-child(2) {
    width: 171px;
}

.page-no {
    position: absolute;
    left: 367px;
    top: 32px;
    font-size: 28.5px;
    font-weight: 300;
    color: #e2e2e2;
}

.send {
    position: absolute;
    left: 677px;
    top: 32px;
    font-size: 27.5px;
    color: #ff4030;
}

.home {
    position: absolute;
    left: 247px;
    top: 126px;
    width: 274px;
    height: 9px;
    border-radius: 5px;
    background: #fff;
}

.home.second {
    top: 137px;
    background: #333;
}
</style>
